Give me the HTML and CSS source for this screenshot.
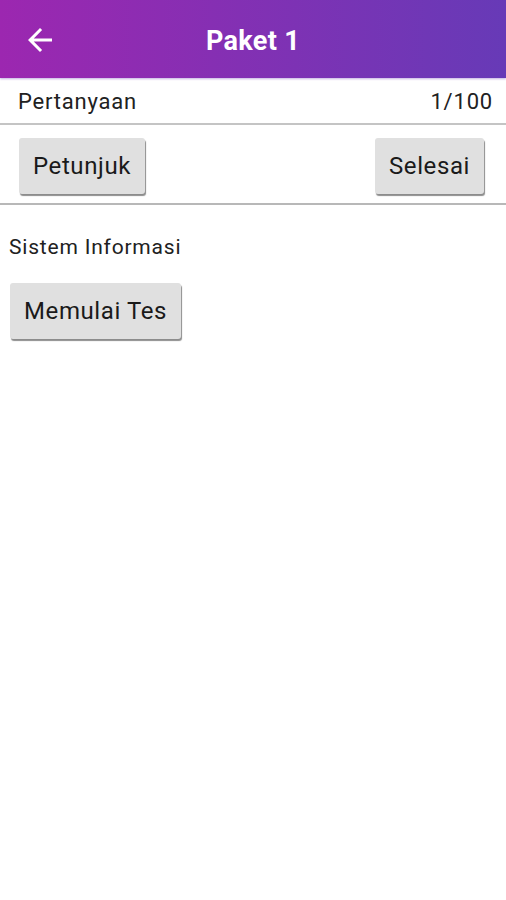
FILE: index.html
```html
<!DOCTYPE html>
<html lang="id">
<head>
    <meta charset="UTF-8">
    <meta name="viewport" content="width=device-width, initial-scale=1.0">
    <title>Paket 1</title>
    <link rel="stylesheet" href="styles.css">
</head>
<body>
    <div class="appbar">
        <div class="back-icon">
            <svg viewBox="0 0 24 24"><path fill="#fff" d="M20 11H7.83l5.59-5.59L12 4l-8 8 8 8 1.41-1.41L7.83 13H20v-2z"/></svg>
        </div>
        <div class="title">Paket 1</div>
    </div>
    <div class="info-row">
        <span>Pertanyaan</span>
        <span>1/100</span>
    </div>
    <div class="action-row">
        <button class="btn">Petunjuk</button>
        <button class="btn">Selesai</button>
    </div>
    <div class="content">
        <div class="subject">Sistem Informasi</div>
        <button class="btn">Memulai Tes</button>
    </div>
</body>
</html>
```

FILE: styles.css
```css
body {
    margin: 0;
    font-family: Roboto, "Liberation Sans", sans-serif;
    background: #fff;
    color: #212121;
}
.appbar {
    position: relative;
    height: 78px;
    display: flex;
    align-items: center;
    justify-content: center;
    background: linear-gradient(to right, #9c27b0, #673ab7);
    box-shadow: 0 1px 2px rgba(103, 58, 183, 0.4);
}
.back-icon {
    position: absolute;
    left: 22px;
    top: 22px;
    width: 36px;
    height: 36px;
}
.back-icon svg {
    width: 36px;
    height: 36px;
}
.title {
    color: #fff;
    font-size: 27px;
    font-weight: 700;
    letter-spacing: 0.3px;
    padding-top: 3px;
}
.info-row {
    display: flex;
    justify-content: space-between;
    align-items: center;
    box-sizing: border-box;
    height: 47px;
    padding: 2px 13px 0 18px;
    font-size: 22px;
    letter-spacing: 0.8px;
    border-bottom: 2px solid #c4c4c4;
}
.action-row {
    display: flex;
    justify-content: space-between;
    align-items: center;
    box-sizing: border-box;
    height: 80px;
    padding: 4px 22px 0 19px;
    border-bottom: 2px solid #b8b8b8;
}
.btn {
    font-family: Roboto, "Liberation Sans", sans-serif;
    font-size: 24px;
    letter-spacing: 0.6px;
    color: #1a1a1a;
    height: 56px;
    padding: 0 14px;
    background: #e0e0e0;
    border: none;
    border-radius: 3px;
    box-shadow: 1px 2px 1px rgba(0, 0, 0, 0.45);
}
.content {
    padding: 30px 10px;
}
.subject {
    font-size: 21px;
    letter-spacing: 0.8px;
    margin: 0 0 24px -1px;
}
```
